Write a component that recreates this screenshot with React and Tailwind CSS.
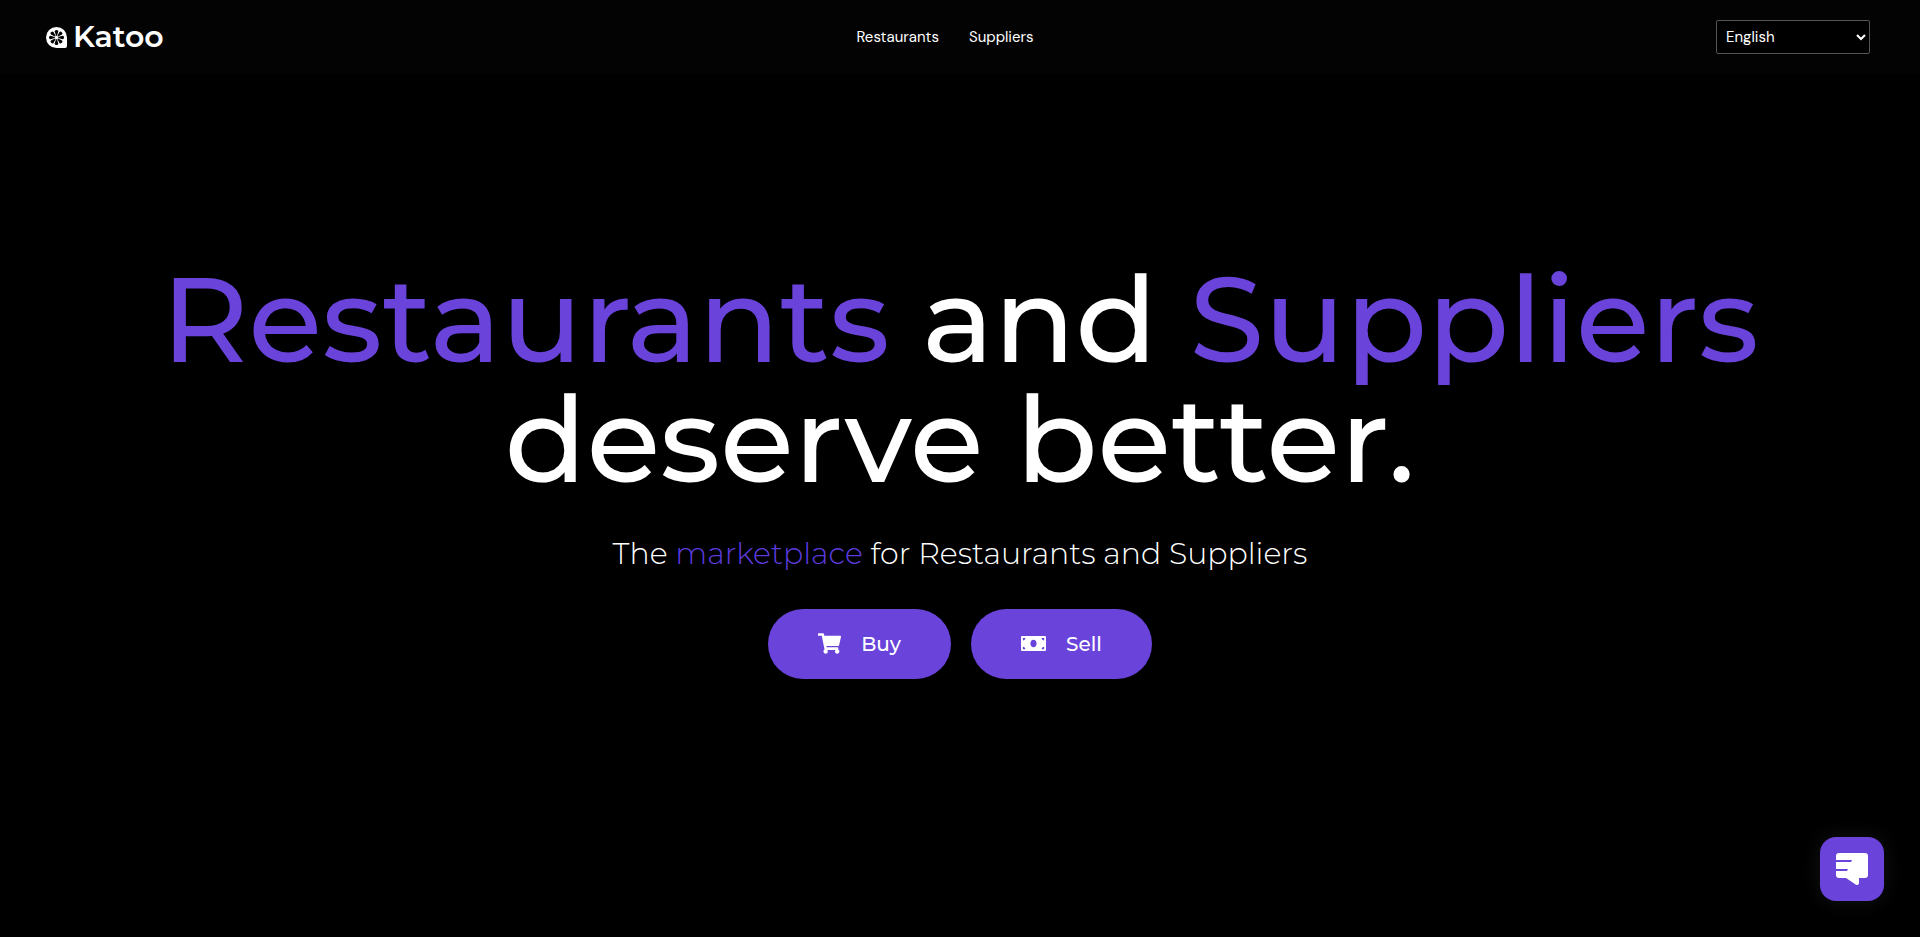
import { FaShoppingCart, FaMoneyBill } from "react-icons/fa";

const petals = [0, 45, 90, 135, 180, 225, 270, 315];

function Logo() {
  return (
    <a href="#" className="flex w-32 items-center gap-1.5 text-white">
      <svg viewBox="0 0 42 42" className="h-[21px] w-[21px] shrink-0" aria-hidden="true">
        <path
          fill="currentColor"
          d="M21 0a21 21 0 0 1 21 21v17a4 4 0 0 1-4 4H21a21 21 0 0 1 0-42z"
        />
        {petals.map((angle) => (
          <path
            key={angle}
            fill="#030303"
            d="M20 17.500L17.400 9Q17 6 21 6T24.600 9L22 17.500z"
            transform={`rotate(${angle} 21 21)`}
          />
        ))}
      </svg>
      <span className="font-[Montserrat,Inter,sans-serif] text-[30px] leading-8 font-semibold">
        Katoo
      </span>
    </a>
  );
}

function Header() {
  return (
    <header className="flex items-center justify-between bg-[#030303] pt-5 pr-[50px] pb-5 pl-[46px] font-['DM_Sans',Inter,sans-serif] text-[15px] leading-5 font-[450] text-white">
      <Logo />
      <nav className="flex gap-[30px]">
        <a href="#restaurants">Restaurants</a>
        <a href="#suppliers">Suppliers</a>
      </nav>
      <select
        aria-label="Language"
        defaultValue="English"
        className="h-[34px] w-[154px] rounded-xs border border-[#555] bg-black px-[5px]"
      >
        <option>English</option>
        <option>Español</option>
      </select>
    </header>
  );
}

function Hero() {
  return (
    <main className="flex grow flex-col items-center justify-center pb-[74px] text-center text-white">
      <h1 className="text-[120px] leading-[120px] font-medium">
        <span className="text-[#6a43db]">Restaurants</span> and{" "}
        <span className="text-[#6a43db]">Suppliers</span>
        <br />
        deserve better.
      </h1>
      <p className="mt-[37px] text-[30px] leading-9 font-light">
        The <span className="text-[#5b3bdc]">marketplace</span> for Restaurants and Suppliers
      </p>
      <div className="mt-[37px] flex gap-5">
        <button className="flex h-[70px] items-center gap-5 rounded-full bg-[#6a43db] px-[50px] text-xl font-medium">
          <FaShoppingCart size={23} />
          Buy
        </button>
        <button className="flex h-[70px] items-center gap-5 rounded-full bg-[#6a43db] px-[50px] text-xl font-medium">
          <FaMoneyBill size={25} />
          Sell
        </button>
      </div>
    </main>
  );
}

function ChatButton() {
  return (
    <button
      aria-label="Open chat"
      className="fixed right-9 bottom-9 flex h-16 w-16 items-center justify-center rounded-2xl bg-[#6a43db] shadow-[0_0_20px_rgba(255,255,255,0.08)]"
    >
      <svg viewBox="0 0 32 32" className="h-8 w-8" aria-hidden="true">
        <path
          fill="#fff"
          d="M3 0h26a3 3 0 0 1 3 3v19a3 3 0 0 1-3 3h-6v5a2 2 0 0 1-3 1.700L10 25H3a3 3 0 0 1-3-3v-4h11l1-2H0V9h15l1-2H0V3a3 3 0 0 1 3-3z"
        />
      </svg>
    </button>
  );
}

export default function App() {
  return (
    <div className="flex min-h-screen flex-col bg-black font-[Montserrat,Inter,sans-serif]">
      <Header />
      <Hero />
      <ChatButton />
    </div>
  );
}
